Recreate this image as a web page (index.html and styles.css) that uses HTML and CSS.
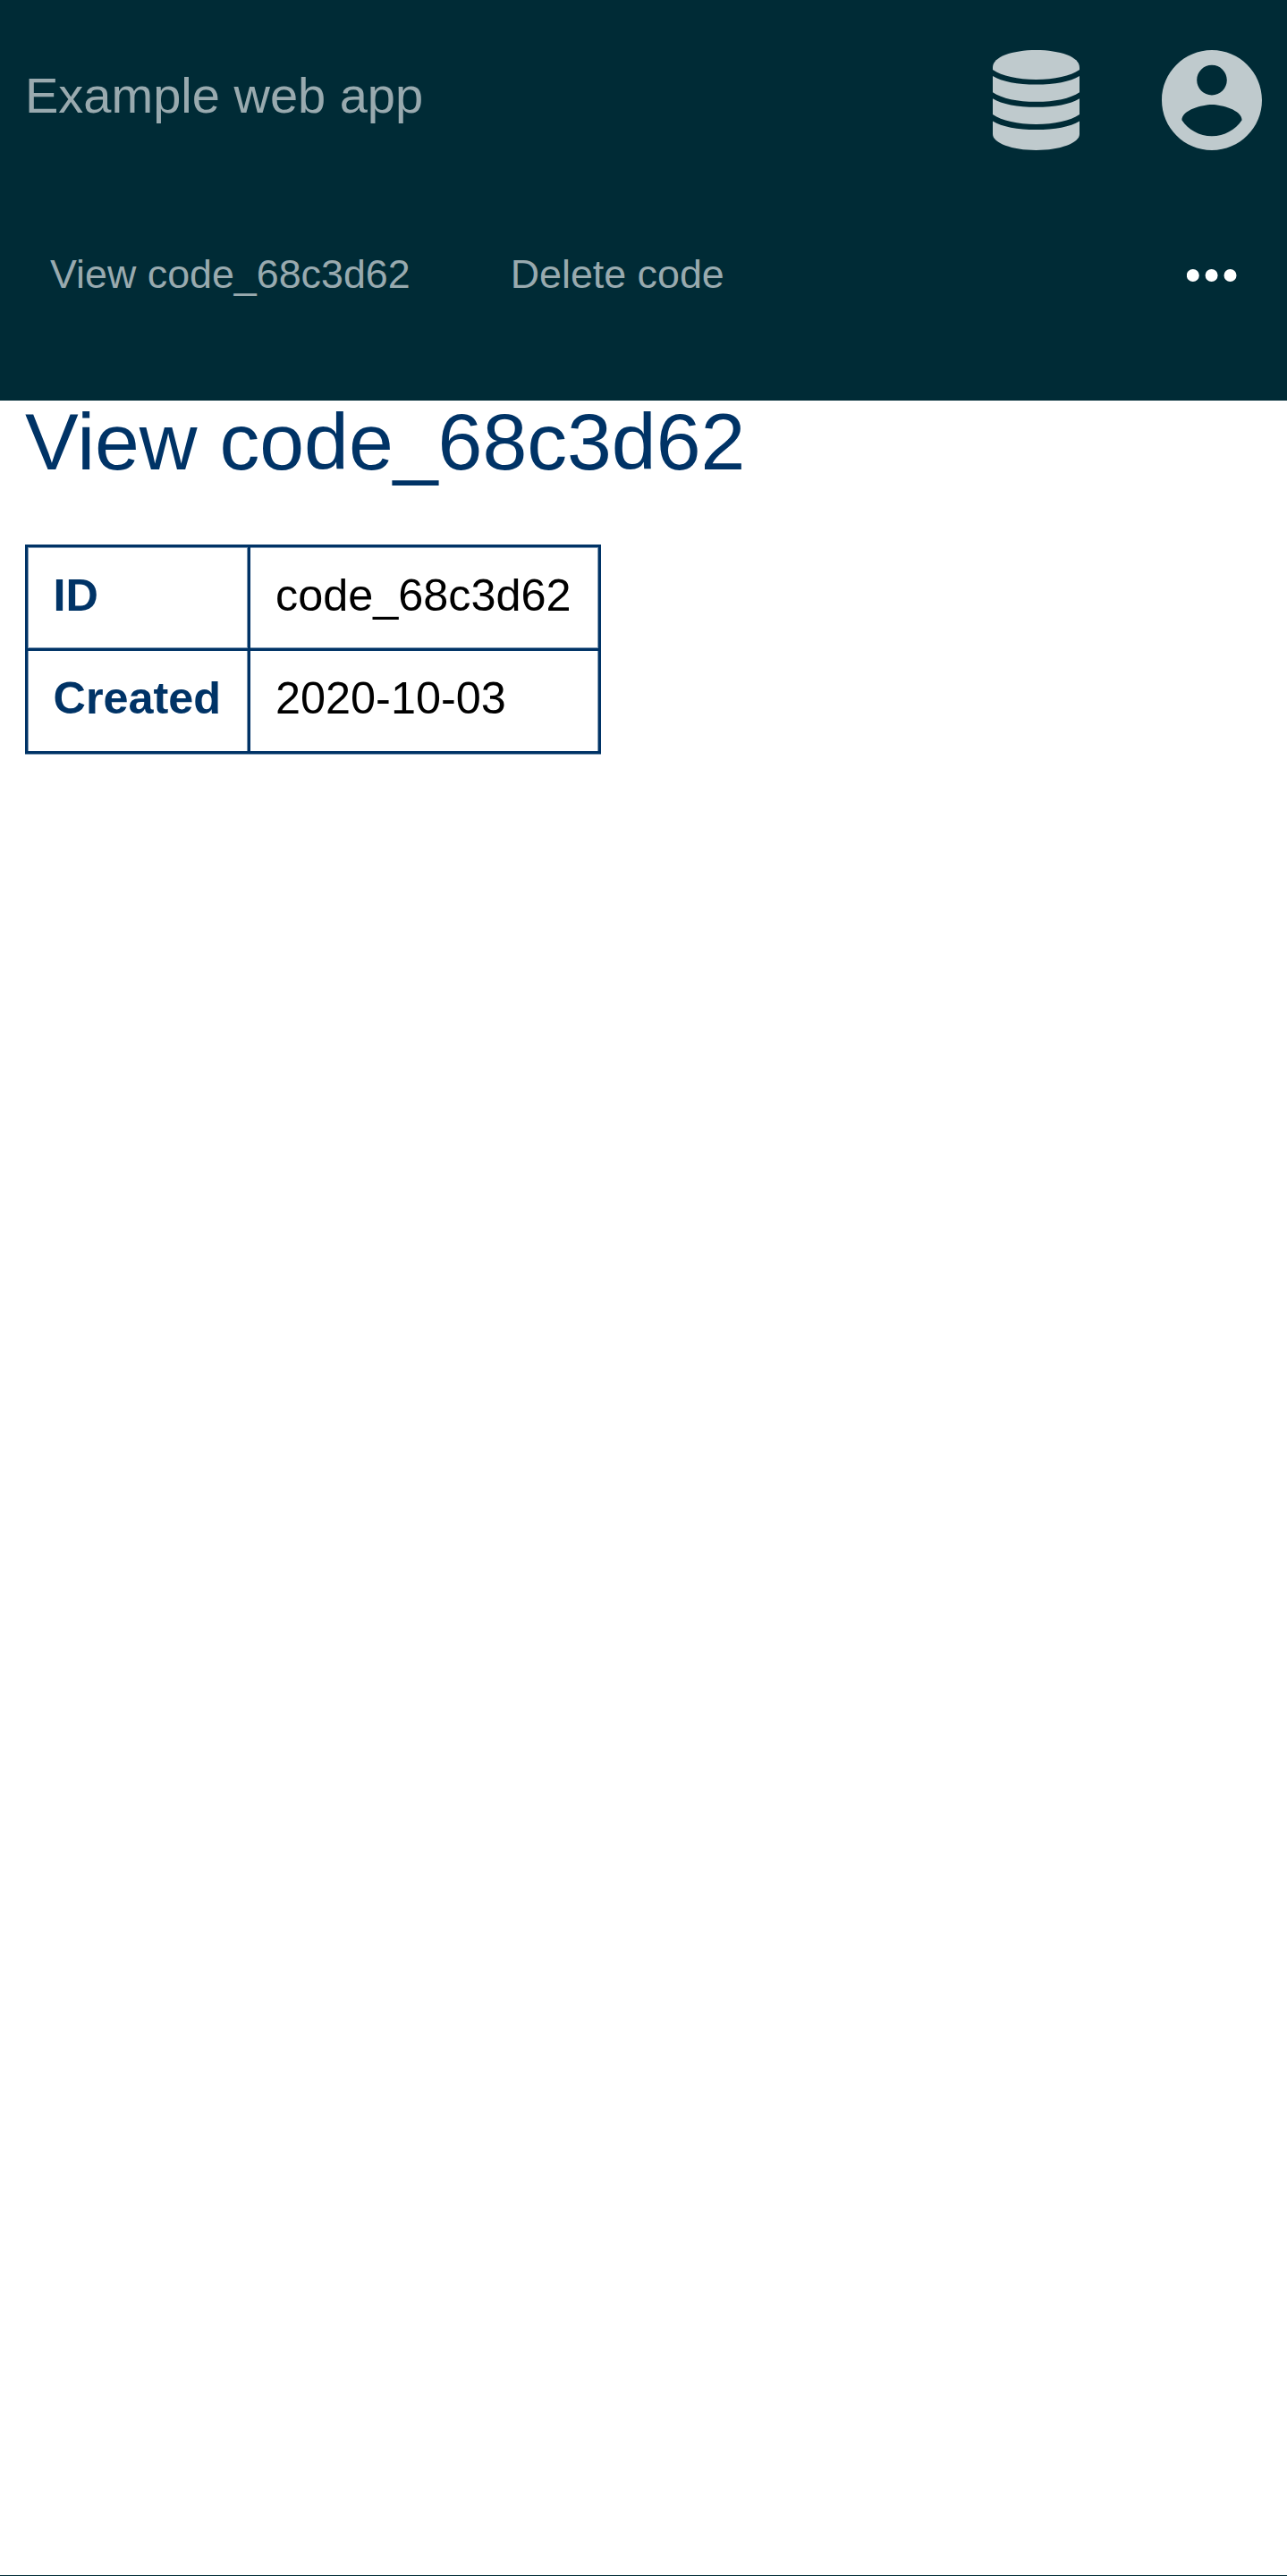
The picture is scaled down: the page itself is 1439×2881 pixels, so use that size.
FILE: index.html
```html
<!DOCTYPE html>
<html lang="en">
<head>
<meta charset="utf-8">
<title>View code_68c3d62</title>
<link rel="stylesheet" href="styles.css">
</head>
<body>
<header class="header">
  <div class="topbar">
    <a class="brand">Example web app</a>
    <div class="actions">
      <svg class="icon-db" viewBox="60 47 291 337" preserveAspectRatio="none">
        <path d="M60 105C60 70 125 47 205.500 47S351 70 351 105V113C320 134 268 146 205.500 146S91 134 60 113Z"/>
        <path d="M60 134C91 153 143 163 205.500 163S320 153 351 134V189C320 210 268 221 205.500 221S91 210 60 189Z"/>
        <path d="M60 210C91 229 143 239 205.500 239S320 229 351 210V264C320 285 268 297 205.500 297S91 285 60 264Z"/>
        <path d="M60 286C91 305 143 315 205.500 315S320 305 351 286V330C351 360 286 384 205.500 384S60 360 60 330Z"/>
      </svg>
      <svg class="icon-user" viewBox="2 2 20 20">
        <path d="M12 2C6.480 2 2 6.480 2 12s4.480 10 10 10 10-4.480 10-10S17.520 2 12 2zm0 3c1.660 0 3 1.340 3 3s-1.340 3-3 3-3-1.340-3-3 1.340-3 3-3zm0 14.200c-2.500 0-4.710-1.280-6-3.220.030-1.990 4-3.080 6-3.080 1.990 0 5.970 1.090 6 3.080-1.290 1.940-3.500 3.220-6 3.220z"/>
      </svg>
    </div>
  </div>
  <nav class="nav">
    <a class="tab">View code_68c3d62</a>
    <a class="tab">Delete code</a>
    <svg class="icon-more" viewBox="0 0 56 14">
      <circle cx="6.800" cy="7" r="7"/><circle cx="27.600" cy="7" r="7"/><circle cx="48.500" cy="7" r="7"/>
    </svg>
  </nav>
</header>
<main class="main">
  <h1 class="title">View code_68c3d62</h1>
  <table class="details">
    <tr><th>ID</th><td>code_68c3d62</td></tr>
    <tr><th>Created</th><td>2020-10-03</td></tr>
  </table>
</main>
<footer class="footer"></footer>
</body>
</html>
```
FILE: styles.css
```css
* { box-sizing: border-box; }
body {
  margin: 0;
  height: 2881px;
  display: flex;
  flex-direction: column;
  background: #fff;
  color: #000;
  font-family: "Liberation Sans", Arial, sans-serif;
}
.header { height: 448px; background: #002b36; }
.topbar {
  height: 224px;
  padding: 56px 28px 0;
  display: flex;
  justify-content: space-between;
  align-items: flex-start;
}
.brand { font-size: 56px; line-height: 101px; color: #99aaaf; }
.actions { display: flex; gap: 92px; fill: #bfcacd; }
.icon-db { width: 97px; height: 112px; }
.icon-user { width: 112px; height: 112px; }
.nav { height: 168px; padding-right: 56px; display: flex; align-items: flex-start; }
.tab { margin-top: 54px; padding: 0 56px; font-size: 44.800px; line-height: 57px; color: #99aaaf; }
.icon-more { width: 56px; height: 14px; margin: 77px 0 0 auto; fill: #fff; }
.main { flex: 1; padding: 0 28px; }
.title {
  margin: 0 0 69px;
  font-size: 89.600px;
  line-height: 92px;
  font-weight: 400;
  color: #003366;
}
.details {
  --soft: #7f99b2;
  display: grid;
  width: 644px;
  border: 3px solid #003366;
  box-shadow: 0 1px 0 var(--soft);
  font-size: 50.400px;
  line-height: 57px;
}
.details tbody { display: grid; grid-template-rows: 116px 112px; }
.details tr { display: grid; grid-template-columns: 249px 389px; }
.details th, .details td { padding: 25px 28px 0; text-align: left; white-space: nowrap; }
.details tr:last-child > * { padding-top: 24px; }
.details th {
  padding-left: 28.500px;
  padding-right: 0;
  color: #003366;
  border-right: 3px solid #003366;
  box-shadow: inset 1px 0 var(--soft), inset -1px 0 var(--soft);
}
.details td { box-shadow: inset -1px 0 var(--soft); }
.details tr:first-child { border-bottom: 3px solid #003366; box-shadow: inset 0 1px var(--soft), inset 0 -1px var(--soft); }
.footer { height: 1px; background: #002b36; }
```
